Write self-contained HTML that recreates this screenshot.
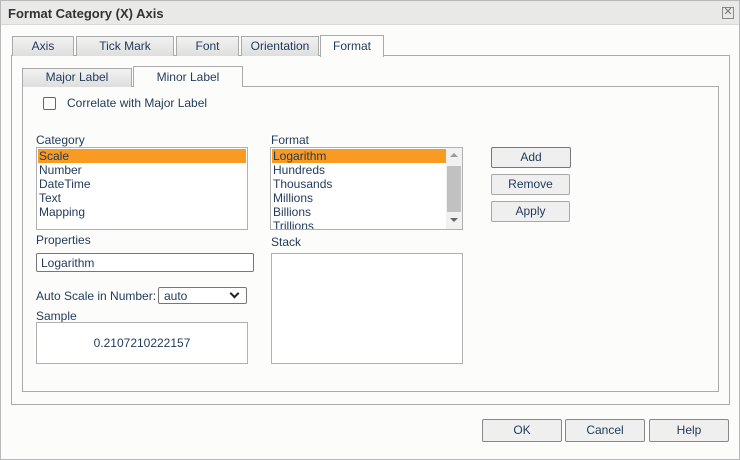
<!DOCTYPE html>
<html><head><style>
*{box-sizing:border-box;margin:0;padding:0}
body{width:740px;height:460px;background:#fcfdfb;font-family:"Liberation Sans",sans-serif;font-size:12px;color:#1f3a5a;position:relative;overflow:hidden}
.a{position:absolute}
.win{left:0;top:0;width:740px;height:460px;border:1px solid #b8b8b8}
.title{left:1px;top:1px;width:738px;height:24px;background:#e9eae7;border-bottom:1px solid #d8d8d8;font-weight:bold;font-size:13px;color:#333;padding:5px 0 0 7px}
.tab{height:20px;border:1px solid #aaa;border-bottom:none;background:linear-gradient(#f2f2f2,#dedede);text-align:center;line-height:19px;font-size:12px}
.act{background:#fcfdfb;height:22px;line-height:21px;z-index:2}
.panel{border:1px solid #aaa}
.box{border:1px solid #b0b0b0;background:#fff}
.row{height:14px;line-height:14px;padding-left:1px;font-size:12px;white-space:nowrap}
.sel{background:#f99a22}
.btn{border:1px solid #a8a8a8;border-radius:2px;background:#efefef;text-align:center;font-size:12px}
</style></head><body>
<div class="a win"></div>
<div class="a title">Format Category (X) Axis</div>
<div class="a" style="left:722px;top:7px;width:12px;height:12px;border:1px solid #888;font-size:11px;line-height:9px;text-align:center;color:#777">✕</div>

<div class="a panel" style="left:11px;top:55px;width:719px;height:350px"></div>
<div class="a tab" style="left:12px;top:36px;width:62px">Axis</div>
<div class="a tab" style="left:76px;top:36px;width:98px">Tick Mark</div>
<div class="a tab" style="left:176px;top:36px;width:63px">Font</div>
<div class="a tab" style="left:241px;top:36px;width:78px">Orientation</div>
<div class="a tab act" style="left:320px;top:35px;width:64px">Format</div>

<div class="a panel" style="left:22px;top:86px;width:697px;height:306px"></div>
<div class="a tab" style="left:22px;top:68px;width:110px;height:19px;line-height:17px">Major Label</div>
<div class="a tab act" style="left:133px;top:66px;width:110px;height:21px;line-height:20px">Minor Label</div>

<div class="a" style="left:43px;top:97px;width:13px;height:13px;border:1px solid #666;border-radius:2px;background:#fff"></div>
<div class="a" style="left:67px;top:96px">Correlate with Major Label</div>

<div class="a" style="left:36px;top:133px">Category</div>
<div class="a box" style="left:36px;top:147px;width:212px;height:83px;padding:1px">
<div class="row sel">Scale</div><div class="row">Number</div><div class="row">DateTime</div><div class="row">Text</div><div class="row">Mapping</div></div>

<div class="a" style="left:271px;top:133px">Format</div>
<div class="a box" style="left:270px;top:147px;width:193px;height:83px;padding:1px;overflow:hidden">
<div class="row sel" style="width:174px">Logarithm</div><div class="row">Hundreds</div><div class="row">Thousands</div><div class="row">Millions</div><div class="row">Billions</div><div class="row">Trillions</div></div>
<div class="a" style="left:446px;top:148px;width:16px;height:81px;background:#f1f1f1"></div>
<div class="a" style="left:447px;top:166px;width:14px;height:46px;background:#c1c1c1"></div>
<div class="a" style="left:450px;top:153px;width:0;height:0;border:4px solid transparent;border-bottom:4px solid #999;border-top:none"></div>
<div class="a" style="left:450px;top:218px;width:0;height:0;border:4px solid transparent;border-top:4px solid #666;border-bottom:none"></div>

<div class="a btn" style="left:491px;top:147px;width:80px;height:21px;line-height:19px;border-color:#777">Add</div>
<div class="a btn" style="left:491px;top:174px;width:79px;height:21px;line-height:19px">Remove</div>
<div class="a btn" style="left:491px;top:201px;width:79px;height:21px;line-height:19px">Apply</div>

<div class="a" style="left:36px;top:233px">Properties</div>
<div class="a box" style="left:36px;top:253px;width:218px;height:19px;border-color:#777;border-radius:2px;padding:2px 0 0 4px">Logarithm</div>
<div class="a" style="left:36px;top:289px">Auto Scale in Number:</div>
<div class="a box" style="left:158px;top:287px;width:89px;height:17px;border-color:#777;border-radius:2px;padding:1px 0 0 5px">auto</div>
<div class="a" style="left:231px;top:290px;width:7px;height:7px;border-right:2px solid #222;border-bottom:2px solid #222;transform:rotate(45deg)"></div>
<div class="a" style="left:36px;top:309px">Sample</div>
<div class="a box" style="left:36px;top:322px;width:212px;height:42px;text-align:center;line-height:40px">0.2107210222157</div>

<div class="a" style="left:271px;top:235px">Stack</div>
<div class="a box" style="left:271px;top:253px;width:192px;height:111px"></div>

<div class="a btn" style="left:482px;top:419px;width:80px;height:23px;line-height:21px;border-color:#888">OK</div>
<div class="a btn" style="left:565px;top:419px;width:80px;height:23px;line-height:21px;border-color:#888">Cancel</div>
<div class="a btn" style="left:649px;top:419px;width:80px;height:23px;line-height:21px;border-color:#888">Help</div>
</body></html>
